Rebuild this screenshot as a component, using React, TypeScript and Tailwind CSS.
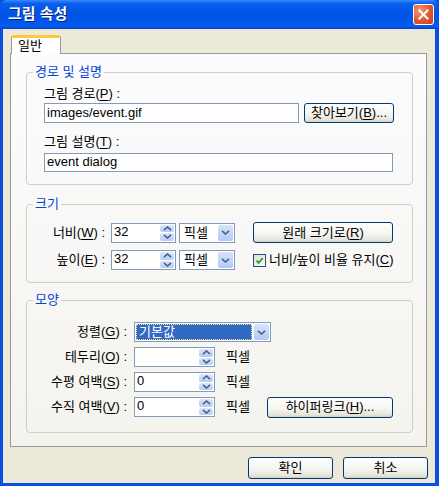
import type { ReactNode } from 'react'

const font = "font-['Liberation_Sans','Noto_Sans_CJK_KR',sans-serif]"

function U({ children }: { children: ReactNode }) {
  return <span className="underline underline-offset-[2px]">{children}</span>
}

function XpButton({ children, className = '' }: { children: ReactNode; className?: string }) {
  return (
    <button
      className={`flex shrink-0 items-center justify-center rounded-[3px] border border-[#003C74] bg-[linear-gradient(to_bottom,#FFFFFF_0%,#F5F5F1_55%,#E6E4DB_88%,#D6D0C5_100%)] text-[13px] leading-[14px] text-black ${className}`}
    >
      {children}
    </button>
  )
}

function Arrow({ down }: { down?: boolean }) {
  return (
    <svg width="9" height="5" viewBox="0 0 9 5">
      <path
        d={down ? 'M1 0.8 L4.5 4 L8 0.8' : 'M1 4.2 L4.5 1 L8 4.2'}
        fill="none"
        stroke="#4D6185"
        strokeWidth="1.6"
      />
    </svg>
  )
}

function SpinInput({ value, className = '' }: { value?: string; className?: string }) {
  return (
    <div className={`flex h-[20px] shrink-0 border border-[#7F9DB9] bg-white ${className}`}>
      <div className="flex-1 pl-[2px] text-[13px] leading-[15px]">{value}</div>
      <div className="flex w-[16px] flex-col gap-[1px] p-[1px]">
        <div className="flex flex-1 items-center justify-center rounded-[2px] bg-[linear-gradient(to_bottom,#DCE7FD,#B6CBF6)]">
          <Arrow />
        </div>
        <div className="flex flex-1 items-center justify-center rounded-[2px] bg-[linear-gradient(to_bottom,#DCE7FD,#B6CBF6)]">
          <Arrow down />
        </div>
      </div>
    </div>
  )
}

function Select({ value, selected, className = '' }: { value: string; selected?: boolean; className?: string }) {
  return (
    <div className={`flex h-[20px] shrink-0 border border-[#7F9DB9] bg-white ${className}`}>
      <div className="flex flex-1 p-[1px]">
        {selected ? (
          <div className="flex-1 border border-dotted border-[#FFE08A] bg-[#316AC5] pl-[2px] text-[13px] leading-[14px] text-white">
            {value}
          </div>
        ) : (
          <div className="flex-1 pl-[3px] text-[13px] leading-[16px]">{value}</div>
        )}
      </div>
      <div className="p-[1px]">
        <div className="flex h-full w-[15px] items-center justify-center rounded-[2px] bg-[linear-gradient(to_bottom,#D7E3FC,#B3C8F5)]">
          <Arrow down />
        </div>
      </div>
    </div>
  )
}

function Group({ title, children, className = '' }: { title: string; children: ReactNode; className?: string }) {
  return (
    <fieldset className={`ml-[15px] w-[387px] rounded-[4px] border border-[#D0D0BF] ${className}`}>
      <legend className="ml-[6px] px-[2px] text-[13px] leading-[14px] text-[#0046D5]">{title}</legend>
      {children}
    </fieldset>
  )
}

export default function App() {
  return (
    <div className={`flex h-[486px] w-[439px] flex-col bg-[#0A4FE0] text-black ${font}`}>
      <div className="flex h-[29px] shrink-0 items-center rounded-t-[7px] bg-[linear-gradient(to_bottom,#3A8CFF_0%,#0A5FEF_12%,#0054E3_45%,#0058EE_80%,#0A5CF0_90%,#0040C8_100%)] pl-[8px] pr-[5px]">
        <span className="text-[15px] font-bold text-white [text-shadow:1px_1px_0_#0A1E80]">그림 속성</span>
        <div className="ml-auto flex h-[21px] w-[21px] items-center justify-center rounded-[3px] border border-white bg-[radial-gradient(circle_at_30%_30%,#F29B7B,#E2562F_55%,#C83E1E)]">
          <svg width="11" height="11" viewBox="0 0 11 11">
            <path d="M1.5 1.5 L9.5 9.5 M9.5 1.5 L1.5 9.5" stroke="white" strokeWidth="2" strokeLinecap="square" />
          </svg>
        </div>
      </div>

      <div className="ml-[3px] mr-[4px] mb-[3px] flex flex-1 flex-col bg-[#ECE9D8] pt-[6px]">
        <div className="relative z-10 ml-[8px] h-[19px] w-[50px] rounded-t-[3px] border-x border-t-[3px] border-x-[#919B9C] border-t-[#FFC83C] bg-white pl-[6px] text-[13px] leading-[15px]">
          일반
        </div>
        <div className="ml-[7px] -mt-px w-[417px] border border-[#919B9C] bg-[linear-gradient(to_bottom,#FCFCFE,#F4F3EE)] pt-[11px] pb-[13px] text-[13px]">
          <Group title="경로 및 설명" className="pt-[8px] pb-[12px]">
            <div className="pl-[17px]">
              <div className="leading-[14px]">
                그림 경로(<U>P</U>) :
              </div>
              <div className="mt-[2px] flex items-center gap-[5px]">
                <div className="h-[20px] w-[255px] border border-[#7F9DB9] bg-white pl-[2px] leading-[17px]">images/event.gif</div>
                <XpButton className="h-[20px] w-[90px]">
                  찾아보기(<U>B</U>)...
                </XpButton>
              </div>
              <div className="mt-[12px] leading-[14px]">
                그림 설명(<U>T</U>) :
              </div>
              <div className="mt-[4px] h-[19px] w-[349px] border border-[#7F9DB9] bg-white pl-[2px] leading-[16px]">event dialog</div>
            </div>
          </Group>

          <Group title="크기" className="mt-[12px] pt-[11px] pb-[12px]">
            <div className="flex h-[21px] items-center">
              <div className="w-[78px] text-right">
                너비(<U>W</U>) :
              </div>
              <SpinInput value="32" className="ml-[6px] w-[65px]" />
              <Select value="픽셀" className="ml-[3px] w-[56px]" />
              <XpButton className="ml-auto mr-[19px] h-[21px] w-[140px]">
                원래 크기로(<U>R</U>)
              </XpButton>
            </div>
            <div className="mt-[7px] flex h-[20px] items-center">
              <div className="w-[78px] text-right">
                높이(<U>E</U>) :
              </div>
              <SpinInput value="32" className="ml-[6px] w-[65px]" />
              <Select value="픽셀" className="ml-[3px] w-[56px]" />
              <div className="ml-[18px] flex h-[13px] w-[13px] items-center justify-center border border-[#1C5180] bg-[linear-gradient(135deg,#DCDCD7,#FFFFFF)]">
                <svg width="9" height="9" viewBox="0 0 9 9">
                  <path d="M1.5 4.5 L3.5 6.8 L7.8 2" fill="none" stroke="#21A121" strokeWidth="1.8" />
                </svg>
              </div>
              <span className="ml-[3px]">
                너비/높이 비율 유지(<U>C</U>)
              </span>
            </div>
          </Group>

          <Group title="모양" className="mt-[10px] pt-[15px] pb-[15px]">
            <div className="flex flex-col gap-[5px]">
              <div className="flex h-[20px] items-center">
                <div className="w-[100px] text-right">
                  정렬(<U>G</U>) :
                </div>
                <Select value="기본값" selected className="ml-[7px] w-[137px]" />
              </div>
              <div className="flex h-[20px] items-center">
                <div className="w-[100px] text-right">
                  테두리(<U>O</U>) :
                </div>
                <SpinInput className="ml-[7px] w-[81px]" />
                <span className="ml-[11px]">픽셀</span>
              </div>
              <div className="flex h-[20px] items-center">
                <div className="w-[100px] text-right">
                  수평 여백(<U>S</U>) :
                </div>
                <SpinInput value="0" className="ml-[7px] w-[81px]" />
                <span className="ml-[11px]">픽셀</span>
              </div>
              <div className="flex h-[20px] items-center">
                <div className="w-[100px] text-right">
                  수직 여백(<U>V</U>) :
                </div>
                <SpinInput value="0" className="ml-[7px] w-[81px]" />
                <span className="ml-[11px]">픽셀</span>
                <XpButton className="ml-auto mr-[19px] h-[21px] w-[126px]">
                  하이퍼링크(<U>H</U>)...
                </XpButton>
              </div>
            </div>
          </Group>
        </div>

        <div className="mt-[10px] flex justify-end gap-[10px] pr-[7px]">
          <XpButton className="h-[22px] w-[85px]">확인</XpButton>
          <XpButton className="h-[22px] w-[85px]">취소</XpButton>
        </div>
      </div>
    </div>
  )
}
